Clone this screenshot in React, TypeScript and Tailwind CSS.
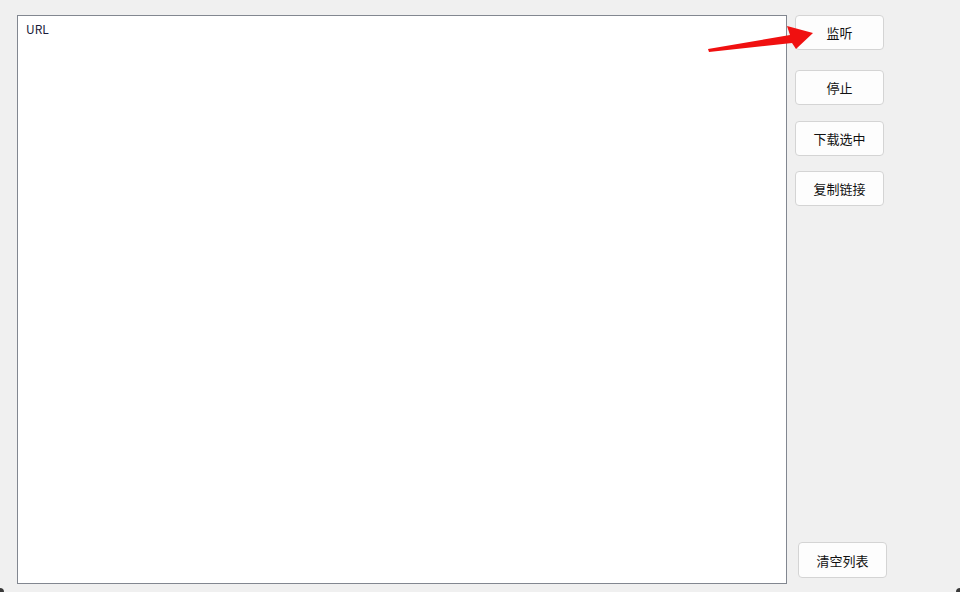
import React from "react";

const font = { fontFamily: '"Noto Sans CJK SC", "Noto Sans", sans-serif' };

function WinButton({ label, className = "" }: { label: string; className?: string }) {
  return (
    <button
      className={`w-[89px] h-[35px] rounded-[4px] border border-[#d4d4d4] bg-[#fdfdfd] text-[13px] text-[#111111] leading-none ${className}`}
      style={font}
    >
      {label}
    </button>
  );
}

export default function App() {
  return (
    <div
      className="relative w-[960px] h-[592px] bg-[#f0f0f0] flex pt-[15px] pl-[17px] pb-[8px] overflow-hidden"
      style={font}
    >
      {/* list */}
      <div className="w-[770px] h-[569px] border border-[#828790] bg-white pl-[8px] pt-[6px]">
        <div className="text-[12px] leading-[14px] text-[#1a1a3a]">URL</div>
      </div>

      {/* right buttons */}
      <div className="ml-[8px] flex flex-col">
        <WinButton label="监听" />
        <WinButton label="停止" className="mt-[20px]" />
        <WinButton label="下载选中" className="mt-[16px]" />
        <WinButton label="复制链接" className="mt-[15px]" />
        <WinButton label="清空列表" className="mt-auto mb-[6px] ml-[3px] h-[36px]" />
      </div>

      {/* annotation arrow */}
      <svg className="absolute left-0 top-0 pointer-events-none" width="960" height="592">
        <polygon
          points="708,49 790,35 787,26 813,33 796,49 792,43 709,52"
          fill="#f01010"
        />
      </svg>

      {/* window corners */}
      <div className="absolute left-0 bottom-0 w-[4px] h-[4px] bg-[#3a3a3a] rounded-tr-[4px]" />
      <div className="absolute right-0 bottom-0 w-[4px] h-[4px] bg-[#3a3a3a] rounded-tl-[4px]" />
    </div>
  );
}
